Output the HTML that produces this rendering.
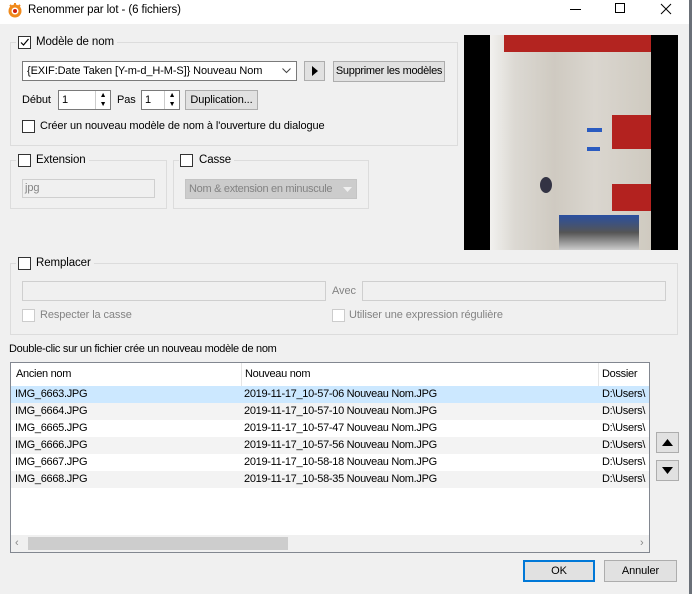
<!DOCTYPE html>
<html><head><meta charset="utf-8"><style>
*{box-sizing:border-box;margin:0;padding:0}
body{width:692px;height:594px;position:relative;overflow:hidden;background:#f0f0f0;font-family:"Liberation Sans",sans-serif;font-size:11px;letter-spacing:-0.1px;color:#000;white-space:nowrap}
.a{position:absolute}
.grp{position:absolute;border:1px solid #dcdcdc}
.cb{position:absolute;width:13px;height:13px;border:1px solid #333;background:#fff}
.cbd{position:absolute;width:13px;height:13px;border:1px solid #ccc;background:#fff}
.lbl{position:absolute;background:#f0f0f0;padding:0 3px 0 2px;line-height:14px;font-size:11.5px}
.btn{position:absolute;background:#e1e1e1;border:1px solid #adadad;text-align:center;line-height:18px}
.inp{position:absolute;background:#fff;border:1px solid #7a7a7a}
.dis{position:absolute;background:#f0f0f0;border:1px solid #cfcfcf;color:#838383}
.row{position:absolute;left:1px;width:640px;height:17px;line-height:17px}
.row span{position:absolute}
</style></head><body>
<div class="a" style="left:0;top:0;width:689px;height:24px;background:#fff"></div>
<svg class="a" style="left:7px;top:2px" width="16" height="16" viewBox="0 0 16 16"><circle cx="8" cy="9" r="6.5" fill="#f08a1c"/><circle cx="8" cy="9" r="3.5" fill="#fff"/><circle cx="8" cy="9" r="2" fill="#d02010"/><path d="M3 3l2 2M13 3l-2 2M8 1v2" stroke="#f08a1c" stroke-width="2"/></svg>
<div class="a" style="left:28px;top:2px;line-height:16px;font-size:11.5px">Renommer par lot - (6 fichiers)</div>
<div class="a" style="left:570px;top:9px;width:11px;height:1px;background:#000"></div>
<div class="a" style="left:615px;top:3px;width:10px;height:10px;border:1px solid #000"></div>
<svg class="a" style="left:660px;top:3px" width="12" height="12"><path d="M1 1L11 11M11 1L1 11" stroke="#000" stroke-width="1"/></svg>
<div class="a" style="left:689px;top:0;width:3px;height:594px;background:#6a7078"></div>

<div class="grp" style="left:10px;top:42px;width:448px;height:104px"></div>
<div class="lbl" style="left:16px;top:35px;padding-left:20px">Modèle de nom</div>
<div class="cb" style="left:18px;top:36px"><svg width="11" height="11"><path d="M2 5.5L4.5 8L9.5 2" stroke="#000" fill="none" stroke-width="1.2"/></svg></div>
<div class="inp" style="left:22px;top:61px;width:275px;height:20px;padding-left:4px;line-height:18px">{EXIF:Date Taken [Y-m-d_H-M-S]} Nouveau Nom<svg class="a" style="right:5px;top:6px" width="9" height="6"><path d="M0.5 0.5L4.5 4.5L8.5 0.5" stroke="#444" fill="none"/></svg></div>
<div class="btn" style="left:304px;top:61px;width:21px;height:20px"><svg width="8" height="10" style="margin-top:4px"><path d="M1 0L7 5L1 10Z" fill="#000"/></svg></div>
<div class="btn" style="left:333px;top:61px;width:112px;height:21px;letter-spacing:-0.3px">Supprimer les modèles</div>
<div class="a" style="left:22px;top:94px">Début</div>
<div class="inp" style="left:58px;top:90px;width:53px;height:20px;padding-left:3px;line-height:18px">1</div>
<div class="a" style="left:95px;top:91px;width:15px;height:18px;border-left:1px solid #ccc;font-size:7px;line-height:9px;text-align:center">▲<br>▼</div>
<div class="a" style="left:117px;top:94px">Pas</div>
<div class="inp" style="left:141px;top:90px;width:39px;height:20px;padding-left:3px;line-height:18px">1</div>
<div class="a" style="left:164px;top:91px;width:15px;height:18px;border-left:1px solid #ccc;font-size:7px;line-height:9px;text-align:center">▲<br>▼</div>
<div class="btn" style="left:185px;top:90px;width:73px;height:20px">Duplication...</div>
<div class="cb" style="left:22px;top:120px"></div>
<div class="a" style="left:40px;top:120px">Créer un nouveau modèle de nom à l'ouverture du dialogue</div>

<div class="grp" style="left:10px;top:160px;width:157px;height:49px"></div>
<div class="lbl" style="left:16px;top:153px;padding-left:20px">Extension</div>
<div class="cb" style="left:18px;top:154px"></div>
<div class="dis" style="left:22px;top:179px;width:133px;height:19px;padding-left:2px;line-height:17px">jpg</div>
<div class="grp" style="left:173px;top:160px;width:196px;height:49px"></div>
<div class="lbl" style="left:179px;top:153px;padding-left:20px">Casse</div>
<div class="cb" style="left:180px;top:154px"></div>
<div class="a" style="left:185px;top:179px;width:172px;height:20px;background:#cccccc;border:1px solid #c4c4c4;color:#838383;padding-left:3px;line-height:18px;letter-spacing:-0.3px">Nom &amp; extension en minuscule<svg class="a" style="right:4px;top:7px" width="9" height="5"><path d="M0 0L9 0L4.5 5Z" fill="#f0f0f0"/></svg></div>

<div class="a" style="left:464px;top:35px;width:214px;height:215px;background:#000;overflow:hidden">
 <div class="a" style="left:26px;top:0;width:161px;height:215px;background:linear-gradient(90deg,#f2f1ef 0%,#dcd9d3 15%,#cfcac1 40%,#dad6cf 65%,#cfcac0 100%)"></div>
 <div class="a" style="left:40px;top:0;width:147px;height:17px;background:#b32420"></div>
 <div class="a" style="left:148px;top:80px;width:39px;height:34px;background:#b3221f"></div>
 <div class="a" style="left:148px;top:149px;width:39px;height:27px;background:#b3221f"></div>
 <div class="a" style="left:123px;top:93px;width:15px;height:4px;background:#2a5bc0"></div>
 <div class="a" style="left:123px;top:112px;width:13px;height:4px;background:#2a5bc0"></div>
 <div class="a" style="left:76px;top:142px;width:12px;height:16px;border-radius:50%;background:#334"></div>
 <div class="a" style="left:95px;top:180px;width:80px;height:35px;background:linear-gradient(#2a4fa0,#555 50%,#ccc)"></div>
</div>

<div class="grp" style="left:10px;top:263px;width:668px;height:72px"></div>
<div class="lbl" style="left:16px;top:256px;padding-left:20px">Remplacer</div>
<div class="cb" style="left:18px;top:257px"></div>
<div class="dis" style="left:22px;top:281px;width:304px;height:20px"></div>
<div class="a" style="left:332px;top:285px;color:#838383">Avec</div>
<div class="dis" style="left:362px;top:281px;width:304px;height:20px"></div>
<div class="cbd" style="left:22px;top:309px"></div>
<div class="a" style="left:40px;top:309px;color:#838383">Respecter la casse</div>
<div class="cbd" style="left:332px;top:309px"></div>
<div class="a" style="left:349px;top:309px;color:#838383">Utiliser une expression régulière</div>

<div class="a" style="left:9px;top:343px;letter-spacing:-0.3px">Double-clic sur un fichier crée un nouveau modèle de nom</div>
<div class="a" style="left:10px;top:362px;width:640px;height:191px;background:#fff;border:1px solid #828790;overflow:hidden;letter-spacing:-0.3px">
 <div class="a" style="left:0;top:0;width:640px;height:23px;line-height:22px">
  <span class="a" style="left:5px">Ancien nom</span>
  <div class="a" style="left:230px;top:0;width:1px;height:23px;background:#e5e5e5"></div>
  <span class="a" style="left:234px">Nouveau nom</span>
  <div class="a" style="left:587px;top:0;width:1px;height:23px;background:#e5e5e5"></div>
  <span class="a" style="left:591px">Dossier</span>
 </div>
 <div class="row" style="top:23px;background:#cce8ff;left:0"><span style="left:4px">IMG_6663.JPG</span><span style="left:233px">2019-11-17_10-57-06 Nouveau Nom.JPG</span><span style="left:591px">D:\Users\</span></div>
 <div class="row" style="top:40px;background:#f3f3f3;left:0"><span style="left:4px">IMG_6664.JPG</span><span style="left:233px">2019-11-17_10-57-10 Nouveau Nom.JPG</span><span style="left:591px">D:\Users\</span></div>
 <div class="row" style="top:57px;left:0"><span style="left:4px">IMG_6665.JPG</span><span style="left:233px">2019-11-17_10-57-47 Nouveau Nom.JPG</span><span style="left:591px">D:\Users\</span></div>
 <div class="row" style="top:74px;background:#f3f3f3;left:0"><span style="left:4px">IMG_6666.JPG</span><span style="left:233px">2019-11-17_10-57-56 Nouveau Nom.JPG</span><span style="left:591px">D:\Users\</span></div>
 <div class="row" style="top:91px;left:0"><span style="left:4px">IMG_6667.JPG</span><span style="left:233px">2019-11-17_10-58-18 Nouveau Nom.JPG</span><span style="left:591px">D:\Users\</span></div>
 <div class="row" style="top:108px;background:#f3f3f3;left:0"><span style="left:4px">IMG_6668.JPG</span><span style="left:233px">2019-11-17_10-58-35 Nouveau Nom.JPG</span><span style="left:591px">D:\Users\</span></div>
 <div class="a" style="left:0;top:172px;width:640px;height:17px;background:#f0f0f0"></div>
 <div class="a" style="left:17px;top:174px;width:260px;height:13px;background:#cdcdcd"></div>
 <div class="a" style="left:4px;top:172px;color:#888;line-height:17px">‹</div>
 <div class="a" style="left:629px;top:172px;color:#888;line-height:17px">›</div>
</div>
<div class="btn" style="left:656px;top:432px;width:23px;height:21px"><svg width="11" height="7" style="margin-top:6px"><path d="M0 7L5.5 0L11 7Z" fill="#000"/></svg></div>
<div class="btn" style="left:656px;top:460px;width:23px;height:21px"><svg width="11" height="7" style="margin-top:6px"><path d="M0 0L5.5 7L11 0Z" fill="#000"/></svg></div>
<div class="btn" style="left:523px;top:560px;width:72px;height:22px;border:2px solid #0078d7;line-height:18px">OK</div>
<div class="btn" style="left:604px;top:560px;width:73px;height:22px;line-height:20px">Annuler</div>
</body></html>
